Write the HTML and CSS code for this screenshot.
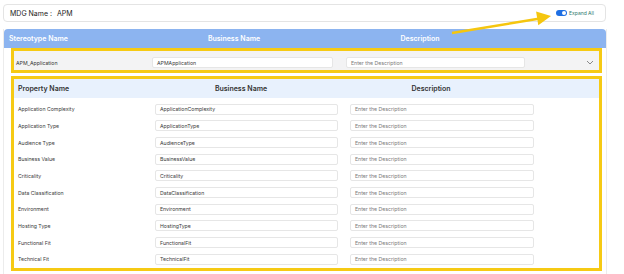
FILE: index.html
```html
<!DOCTYPE html>
<html>
<head>
    <meta charset="utf-8">
    <link rel="stylesheet" href="styles.css">
</head>
<body>
    <div class="page">
        <!-- barra superior con el nombre MDG -->
        <div class="mdg-bar">
            <div class="mdg-name">MDG Name :<span class="mdg-value">APM</span></div>
            <div class="expand"><span class="toggle"><span class="knob"></span></span>Expand All</div>
        </div>

        <div class="panel">
            <div class="panel-head">
                <div>Stereotype Name</div>
                <div class="center">Business Name</div>
                <div class="center">Description</div>
            </div>

            <div class="panel-body">
                <div class="mark">
                    <div class="stereo-row">
                        <div class="label">APM_Application</div>
                        <div class="field">APMApplication</div>
                        <div class="field placeholder">Enter the Description</div>
                        <svg class="chevron" width="8" height="5" viewBox="0 0 8 5"><path d="M1 1 L4 4 L7 1" fill="none" stroke="#8a8a8a" stroke-width="1"/></svg>
                    </div>
                </div>

                <div class="mark props">
                    <div class="props-head">
                        <div>Property Name</div>
                        <div class="center">Business Name</div>
                        <div class="center">Description</div>
                    </div>
                    <div class="rows">
                        <div class="prop-row"><div class="label">Application Complexity</div><div class="field">ApplicationComplexity</div><div class="field placeholder">Enter the Description</div></div>
                        <div class="prop-row"><div class="label">Application Type</div><div class="field">ApplicationType</div><div class="field placeholder">Enter the Description</div></div>
                        <div class="prop-row"><div class="label">Audience Type</div><div class="field">AudienceType</div><div class="field placeholder">Enter the Description</div></div>
                        <div class="prop-row"><div class="label">Business Value</div><div class="field">BusinessValue</div><div class="field placeholder">Enter the Description</div></div>
                        <div class="prop-row"><div class="label">Criticality</div><div class="field">Criticality</div><div class="field placeholder">Enter the Description</div></div>
                        <div class="prop-row"><div class="label">Data Classification</div><div class="field">DataClassification</div><div class="field placeholder">Enter the Description</div></div>
                        <div class="prop-row"><div class="label">Environment</div><div class="field">Environment</div><div class="field placeholder">Enter the Description</div></div>
                        <div class="prop-row"><div class="label">Hosting Type</div><div class="field">HostingType</div><div class="field placeholder">Enter the Description</div></div>
                        <div class="prop-row"><div class="label">Functional Fit</div><div class="field">FunctionalFit</div><div class="field placeholder">Enter the Description</div></div>
                        <div class="prop-row"><div class="label">Technical Fit</div><div class="field">TechnicalFit</div><div class="field placeholder">Enter the Description</div></div>
                    </div>
                </div>
            </div>
        </div>

        <!-- flecha amarilla que apunta al switch -->
        <svg class="arrow" width="624" height="274" viewBox="0 0 624 274">
            <line x1="452" y1="33" x2="540" y2="18.6" stroke="#F5C60F" stroke-width="2.5"/>
            <polygon points="551,16 538.3,25.2 536.1,11.4" fill="#F5C60F"/>
        </svg>
    </div>
</body>
</html>
```

FILE: styles.css
```css
body {
    margin: 0;
    background-color: #ffffff;
    font-family: 'Inter', 'Liberation Sans', sans-serif;
    color: #2b2b2b;
}

.page {
    position: relative;
    width: 604px;
    padding: 4px 0 0 3px;
}

/* ================= BARRA MDG ================= */
.mdg-bar {
    box-sizing: border-box;
    width: 603px;
    height: 18px;
    border: 1px solid #e4e4e4;
    border-radius: 4px;
    display: flex;
    align-items: center;
    justify-content: space-between;
    padding: 0 11px 0 6px;
}

.mdg-name {
    font-size: 7px;
    color: #222;
}

.mdg-value {
    margin-left: 5px;
}

.expand {
    display: flex;
    align-items: center;
    gap: 2px;
    font-size: 5px;
    color: #2f7a6d;
}

.toggle {
    width: 11px;
    height: 6px;
    border-radius: 3px;
    background-color: #1f6fe3;
    display: flex;
    align-items: center;
    justify-content: flex-end;
    padding: 0 1px;
    box-sizing: border-box;
}

.knob {
    width: 4px;
    height: 4px;
    border-radius: 50%;
    background-color: #ffffff;
}

/* ================= PANEL ================= */
.panel {
    margin-top: 7px;
    border-left: 1px solid #ececec;
    border-right: 1px solid #ececec;
    height: 245px;
}

.panel-head {
    height: 19px;
    background-color: #8cb4f0;
    border-radius: 4px 4px 0 0;
    color: #ffffff;
    font-weight: 600;
    font-size: 7px;
    display: grid;
    grid-template-columns: 129px 192px 180px;
    align-items: center;
    padding-left: 5px;
}

.center {
    text-align: center;
}

.panel-body {
    padding: 0 4px 0 7px;
}

.mark {
    border: 3px solid #f6ca14;
}

.stereo-row {
    box-sizing: border-box;
    height: 19px;
    padding-top: 4px;
    background-color: #f3f3f4;
    display: grid;
    grid-template-columns: 138px 181px 192px 1fr;
    align-items: center;
    font-size: 5.2px;
    color: #333;
}

.stereo-row .label {
    padding-left: 2px;
}

.stereo-row .placeholder {
    margin-left: 13px;
}

.chevron {
    justify-self: end;
    margin-right: 5px;
}

.field {
    box-sizing: border-box;
    height: 11px;
    border: 1px solid #e6e6e6;
    border-radius: 2px;
    background-color: #ffffff;
    font-size: 5.2px;
    color: #3a3a3a;
    display: flex;
    align-items: center;
    padding-left: 4px;
}

.placeholder {
    color: #7a7a7a;
}

.props {
    margin-top: 3px;
}

.props-head {
    height: 19px;
    background-color: #e8f1fd;
    display: grid;
    grid-template-columns: 126px 194px 186px;
    align-items: center;
    padding-left: 4px;
    font-size: 7px;
    font-weight: 600;
    color: #333;
}

.rows {
    padding-top: 3px;
}

.prop-row {
    height: 16.67px;
    display: grid;
    grid-template-columns: 141px 183px 196px;
    align-items: center;
    font-size: 5.2px;
    color: #3a3a3a;
}

.prop-row .label {
    padding-left: 4px;
}

.prop-row .placeholder {
    margin-left: 12px;
}

.arrow {
    position: absolute;
    left: 0;
    top: 0;
    pointer-events: none;
}
```
